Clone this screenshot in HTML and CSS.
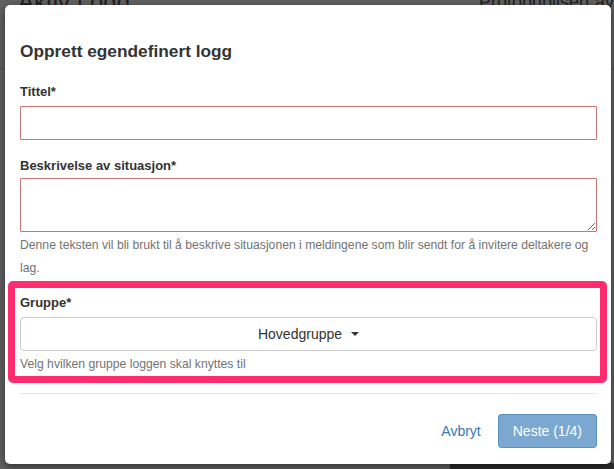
FILE: index.html
```html
<!DOCTYPE html>
<html lang="no">
<head>
<meta charset="utf-8">
<title>Opprett egendefinert logg</title>
<link rel="stylesheet" href="styles.css">
</head>
<body>
<div class="page">
  <div class="page-top">
    <span class="page-title">Aktiv Logg</span>
    <span class="page-meta">Protopublisert av</span>
  </div>
  <div class="page-rule"></div>
  <div class="page-bottom"></div>
</div>
<div class="backdrop"></div>
<div class="modal">
  <div class="modal-header">
    <h4 class="modal-title">Opprett egendefinert logg</h4>
  </div>
  <div class="modal-body">
    <div class="field">
      <label class="label">Tittel*</label>
      <input class="control error" type="text">
    </div>
    <div class="field">
      <label class="label">Beskrivelse av situasjon*</label>
      <textarea class="control error area"></textarea>
      <p class="help">Denne teksten vil bli brukt til å beskrive situasjonen i meldingene som blir sendt for å invitere deltakere og lag.</p>
    </div>
    <div class="field">
      <label class="label">Gruppe*</label>
      <button class="control select" type="button">Hovedgruppe <span class="caret"></span></button>
      <p class="help">Velg hvilken gruppe loggen skal knyttes til</p>
    </div>
  </div>
  <div class="modal-footer">
    <a class="link" href="#">Avbryt</a>
    <button class="btn" type="button" disabled>Neste (1/4)</button>
  </div>
  <div class="highlight"></div>
</div>
</body>
</html>
```
FILE: styles.css
```css
html, body {
  margin: 0;
  padding: 0;
}
body {
  width: 614px;
  height: 469px;
  overflow: hidden;
  position: relative;
  font-family: "Liberation Sans", Arial, sans-serif;
  color: #333;
  background: #ffffff;
}
.page {
  height: 469px;
  display: flex;
  flex-direction: column;
}
.page-top {
  display: flex;
  justify-content: space-between;
  margin-top: -12px;
  padding: 0 0 0 18px;
  height: 80px;
  border-bottom: 1px solid #ddd;
}
.page-title {
  font-size: 24px;
  color: #555;
}
.page-meta {
  font-size: 18px;
  color: #555;
  margin-top: 4px;
}
.page-rule {
  flex: 1;
}
.page-bottom {
  height: 6px;
  margin-left: 450px;
  background: #777;
}
.backdrop {
  position: absolute;
  inset: 0;
  background: rgba(0, 0, 0, 0.62);
}
.modal {
  position: absolute;
  left: 5px;
  top: 5px;
  width: 606px;
  height: 459px;
  box-sizing: border-box;
  background: #fff;
  border-radius: 5px;
  box-shadow: 0 3px 9px rgba(0, 0, 0, 0.5);
  display: flex;
  flex-direction: column;
}
.modal-header {
  padding: 36px 14px 0 15px;
}
.modal-title {
  margin: 0;
  font-size: 17.3px;
  line-height: 20px;
  font-weight: bold;
  color: #333;
}
.modal-body {
  padding: 0 14px 0 15px;
  display: flex;
  flex-direction: column;
}
.field {
  display: flex;
  flex-direction: column;
}
.field:first-child {
  margin-top: 23px;
}
.field + .field {
  margin-top: 18px;
}
.field:last-child {
  margin-top: 15px;
}
.label {
  font-size: 13px;
  line-height: 16px;
  font-weight: bold;
  margin-bottom: 6px;
}
.control {
  box-sizing: border-box;
  width: 100%;
  height: 34px;
  margin: 0;
  border: 1px solid #ccc;
  border-radius: 1px;
  background: #fff;
  font-family: inherit;
  font-size: 14px;
  color: #333;
}
.control.error {
  border-color: #c97474;
}
.area {
  height: 54px;
  resize: vertical;
  display: block;
}
.field:nth-child(2) .label {
  margin-bottom: 4px;
}
.help {
  margin: 2px 0 0;
  font-size: 12.2px;
  line-height: 23px;
  color: #737373;
}
.select {
  border-radius: 4px;
  display: flex;
  align-items: center;
  justify-content: center;
  gap: 9px;
  padding: 0 12px;
}
.caret {
  width: 0;
  height: 0;
  border-top: 4px solid #333;
  border-left: 4px solid transparent;
  border-right: 4px solid transparent;
}
.modal-footer {
  margin: 17px 14px 0 15px;
  padding-top: 20px;
  border-top: 1px solid #e5e5e5;
  display: flex;
  justify-content: flex-end;
  align-items: center;
  gap: 17px;
}
.link {
  color: #337ab7;
  text-decoration: none;
  font-size: 14px;
}
.btn {
  height: 34px;
  padding: 0 14px;
  border: 1px solid rgba(46, 109, 164, 0.4);
  border-radius: 4px;
  background: #7aa8d0;
  color: #fff;
  font-family: inherit;
  font-size: 14px;
}
.highlight {
  position: absolute;
  left: 3px;
  top: 276px;
  width: 599px;
  height: 102px;
  box-sizing: border-box;
  border: 7px solid #ff2d6f;
  border-radius: 5px;
  pointer-events: none;
}
```
